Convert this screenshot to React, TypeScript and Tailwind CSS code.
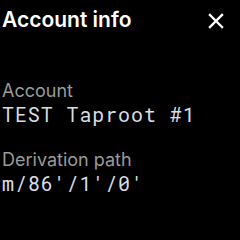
import React from 'react';

const Field = ({ label, value }: { label: string; value: string }) => (
  <div className="flex flex-col">
    <span className="text-[18px] leading-[22px] text-[#9a9a9a]">{label}</span>
    <span className="font-['Roboto_Mono','DejaVu_Sans_Mono',monospace] text-[20px] leading-[25px] tracking-[0.9px] text-[#d8dde3]">
      {value}
    </span>
  </div>
);

const App = () => {
  return (
    <div className="h-[240px] w-[240px] bg-black pl-[2px] font-['Inter',sans-serif] text-white">
      {/* header */}
      <header className="flex items-center justify-between pt-[7px] pr-[16px]">
        <h1 className="text-[21px] font-semibold leading-[26px]">Account info</h1>
        <svg width="16" height="16" viewBox="0 0 16 16" className="mt-[1px]">
          <path d="M2 2 L14 14 M14 2 L2 14" stroke="white" strokeWidth="2.4" strokeLinecap="square" />
        </svg>
      </header>

      <main className="mt-[47px] flex flex-col gap-[22px]">
        <Field label="Account" value="TEST Taproot #1" />
        <Field label="Derivation path" value="m/86'/1'/0'" />
      </main>
    </div>
  );
};

export default App;
